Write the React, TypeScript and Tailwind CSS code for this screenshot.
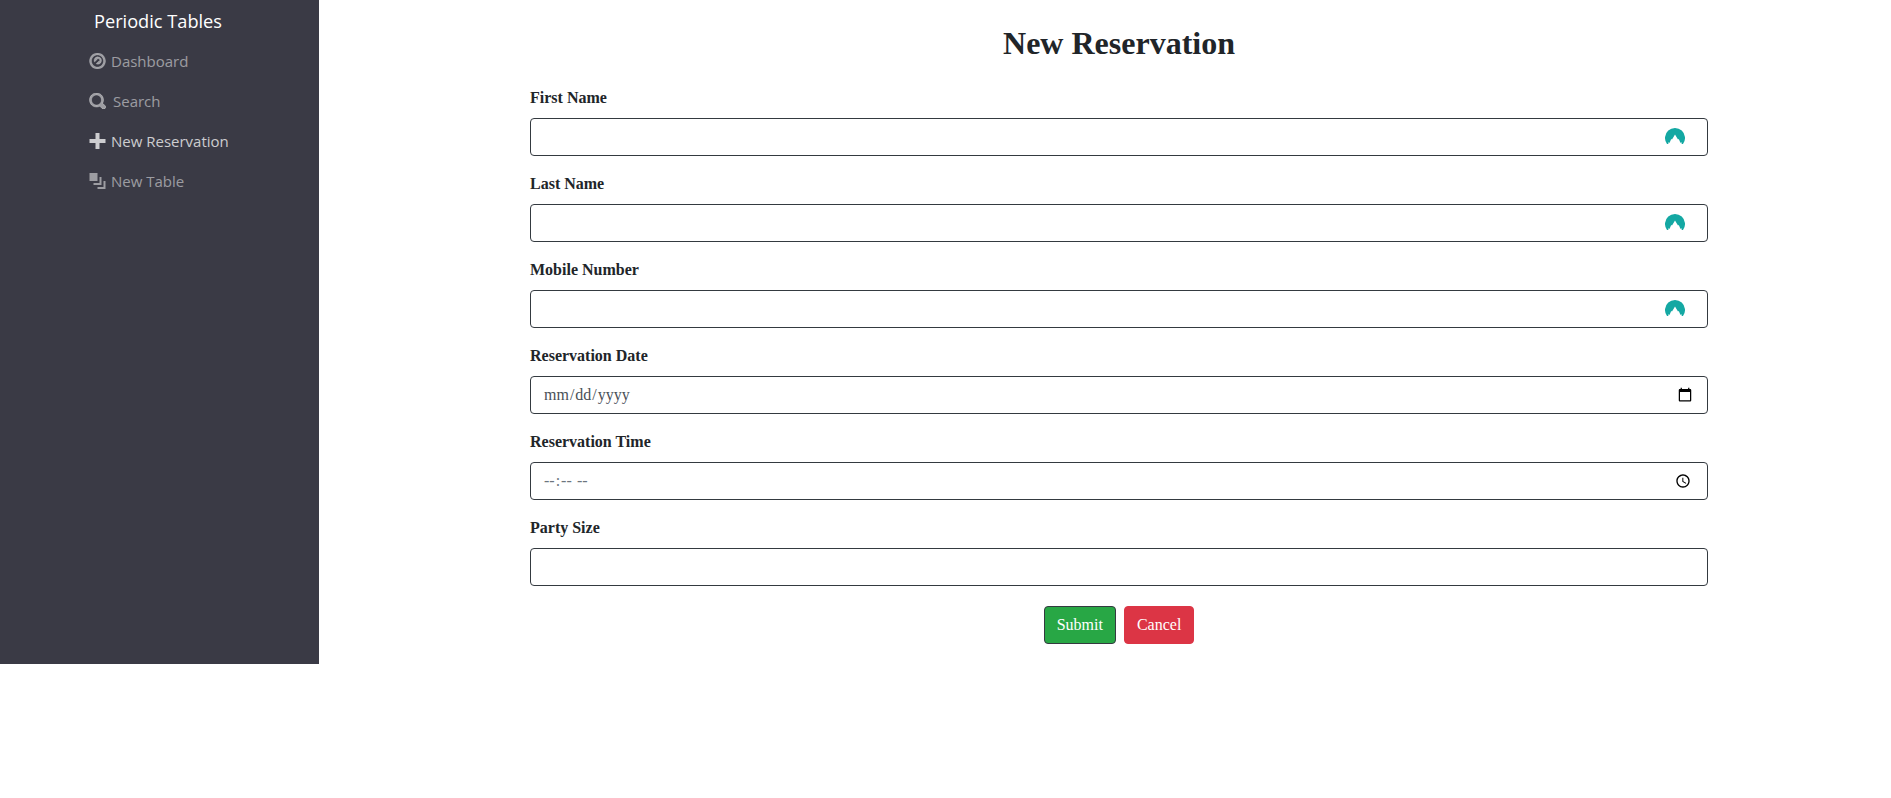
const NAV = [
  {
    label: "Dashboard",
    gap: "gap-[5px]",
    active: false,
    icon: "stroke-current stroke-[0.2]",
    d: "M4 0c-2.2 0-4 1.8-4 4s1.8 4 4 4 4-1.800 4-4-1.800-4-4-4zm0 1c1.660 0 3 1.340 3 3s-1.340 3-3 3-3-1.340-3-3 1.340-3 3-3zm.2 .9c-1.100 0-1.900.8-1.900 1.800 0 .3.100.6.200.8l1.200-1.100c.1-.4.500-.6.900-.5.400.1.600.5.500.9-.1.300-.4.500-.7.500l-1.100 1.100c.3.100.6.200.9.200 1 0 1.800-.8 1.800-1.900s-.9-1.800-2-1.800z",
  },
  {
    label: "Search",
    gap: "gap-[7px]",
    active: false,
    icon: "stroke-current stroke-[0.3]",
    d: "M3.5 0c-1.930 0-3.500 1.570-3.500 3.500s1.570 3.500 3.500 3.500c.590 0 1.170-.140 1.660-.410a1 1 0 0 0 .130.130l1 1a1.020 1.020 0 1 0 1.440-1.440l-1-1a1 1 0 0 0-.160-.130c.270-.490.440-1.060.440-1.660 0-1.930-1.570-3.500-3.500-3.500zm0 1c1.390 0 2.500 1.110 2.500 2.500 0 .660-.240 1.270-.660 1.720-.010.010-.020.020-.030.030a1 1 0 0 0-.130.130c-.440.400-1.040.630-1.690.630-1.390 0-2.500-1.110-2.500-2.500s1.110-2.500 2.500-2.500z",
  },
  {
    label: "New Reservation",
    gap: "gap-[5px]",
    active: true,
    icon: "",
    d: "M3 0v3h-3v2h3v3h2v-3h3v-2h-3v-3h-2z",
  },
  {
    label: "New Table",
    gap: "gap-[5px]",
    active: false,
    icon: "",
    d: "M0 0v4h4v-4h-4zm5 2v3h-3v1h4v-4h-1zm2 2v3h-3v1h4v-4h-1z",
  },
];

const FIELDS = [
  { label: "First Name", type: "text", badge: true, tone: "text-[#495057]" },
  { label: "Last Name", type: "text", badge: true, tone: "text-[#495057]" },
  { label: "Mobile Number", type: "text", badge: true, tone: "text-[#495057]" },
  { label: "Reservation Date", type: "date", badge: false, tone: "text-[#495057]" },
  { label: "Reservation Time", type: "time", badge: false, tone: "text-[#6c757d]" },
  { label: "Party Size", type: "text", badge: false, tone: "text-[#495057]" },
];

function PasswordBadge() {
  return (
    <svg
      viewBox="0 0 20 16"
      className="absolute right-[23px] top-[10px] h-[16px] w-[20px]"
    >
      <path
        fill="#14a8a3"
        d="M2 16A10 10 0 1 1 18 16L16.800 16 16.300 14 15.500 15 13.800 11 13 11.500 10 6.500 7 11.500 6.200 11 4.500 15 3.700 14 3.200 16Z"
      />
    </svg>
  );
}

export default function App() {
  return (
    <div className="flex min-h-[798px] items-start bg-white font-['Liberation_Serif',serif] text-[#212529]">
      <aside className="h-[664px] w-[319px] shrink-0 bg-[#3a3a45] font-['Open_Sans',sans-serif]">
        <div className="h-[41px] pl-[94px] pt-[6px] text-[18.200px] leading-[30px] text-white">
          Periodic Tables
        </div>
        <nav className="flex flex-col">
          {NAV.map((item) => (
            <a
              key={item.label}
              className={`flex h-[40px] items-center pl-[89px] text-[15px] ${item.gap} ${
                item.active ? "text-white/75" : "text-white/50"
              }`}
            >
              <svg viewBox="0 0 8 8" className={`h-[16px] w-[17px] fill-current ${item.icon}`}>
                <path d={item.d} />
              </svg>
              {item.label}
            </a>
          ))}
        </nav>
      </aside>
      <main className="pl-[211px] pt-[24px]">
        <form className="w-[1178px]">
          <h1 className="mb-[24px] text-center text-[32px] font-bold leading-[38px]">
            New Reservation
          </h1>
          {FIELDS.map((field) => (
            <div key={field.label} className="mb-[16px]">
              <label className="mb-[8px] block text-[16px] font-bold leading-[24px]">
                {field.label}
              </label>
              <div className="relative">
                <input
                  type={field.type}
                  className={`block h-[38px] w-full rounded-[4px] border border-[#343a40] bg-white px-[12px] py-[6px] text-[16px] leading-[24px] ${field.tone}`}
                />
                {field.badge && <PasswordBadge />}
              </div>
            </div>
          ))}
          <div className="flex justify-center gap-[8px] pt-[4px]">
            <button
              type="button"
              className="h-[38px] rounded-[4px] border border-[#343a40] bg-[#28a745] px-[12px] text-[16px] text-white"
            >
              Submit
            </button>
            <button
              type="button"
              className="h-[38px] rounded-[4px] border border-[#dc3545] bg-[#dc3545] px-[12px] text-[16px] text-white"
            >
              Cancel
            </button>
          </div>
        </form>
      </main>
    </div>
  );
}
